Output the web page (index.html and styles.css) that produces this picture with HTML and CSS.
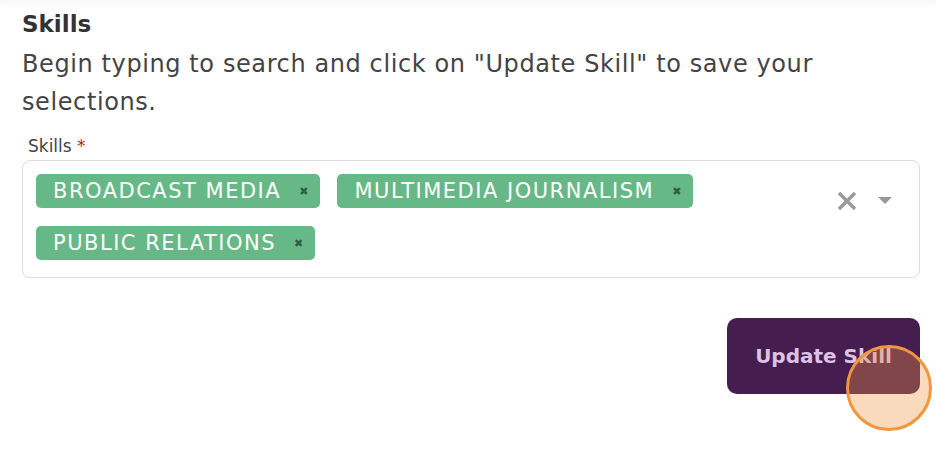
FILE: index.html
```html
<!DOCTYPE html>
<html lang="en">
<head>
    <meta charset="UTF-8">
    <title>Skills</title>
    <link rel="stylesheet" href="styles.css">
</head>
<body>
    <div class="top-bar"></div>

    <div class="section">
        <h2 class="section-title">Skills</h2>
        <p class="section-help">Begin typing to search and click on "Update Skill" to save your selections.</p>

        <label class="field-label">Skills <span class="required">*</span></label>
        <div class="multi-select">
            <div class="tags">
                <span class="tag">BROADCAST MEDIA <span class="tag-remove">&#x2716;</span></span>
                <span class="tag">MULTIMEDIA JOURNALISM <span class="tag-remove">&#x2716;</span></span>
                <span class="tag">PUBLIC RELATIONS <span class="tag-remove">&#x2716;</span></span>
            </div>
            <div class="controls">
                <svg class="clear-icon" width="22" height="22" viewBox="0 0 22 22">
                    <path d="M3 3 L19 19 M19 3 L3 19" stroke="#999" stroke-width="3.4" stroke-linecap="butt"/>
                </svg>
                <svg class="caret-icon" width="14" height="8" viewBox="0 0 14 8">
                    <path d="M0 0 L14 0 L7 7 Z" fill="#999"/>
                </svg>
            </div>
        </div>

        <div class="actions">
            <button class="update-btn">Update Skill</button>
            <div class="click-marker"></div>
        </div>
    </div>
</body>
</html>
```

FILE: styles.css
```css
html, body {
    min-height: 100%;
}

body {
    margin: 0;
    padding: 0;
    font-family: "DejaVu Sans", Arial, sans-serif;
    background-color: #fff;
    color: #3a3a3a;
    min-height: 464px;
}

.top-bar {
    height: 0;
    box-shadow: 0 0 8px 3px rgba(0,0,0,0.06);
}

.section {
    padding: 9px 16px 80px 22px;
}

.section-title {
    margin: 0 0 6px 0;
    font-size: 23px;
    font-weight: 700;
    line-height: 30px;
    color: #333;
}

.section-help {
    margin: 0;
    font-size: 24px;
    letter-spacing: 0.6px;
    line-height: 38px;
    color: #444;
    max-width: 830px;
}

.field-label {
    display: block;
    margin: 14px 0 0 6px;
    font-size: 17px;
    line-height: 22px;
    color: #444;
}

.required {
    color: #b3262b;
}

.multi-select {
    margin-top: 3px;
    border: 1px solid #ddd;
    border-radius: 8px;
    display: flex;
    align-items: flex-start;
    padding: 13px 14px 17px 13px;
    min-height: 86px;
}

.tags {
    flex: 1;
    display: flex;
    flex-wrap: wrap;
    gap: 18px 17px;
}

.tag {
    display: inline-flex;
    align-items: center;
    height: 34px;
    padding: 0 12px 0 17px;
    background-color: #66b887;
    color: #fff;
    border-radius: 5px;
    font-size: 21px;
    letter-spacing: 1.5px;
}

.tag-remove {
    margin-left: 18px;
    font-size: 11px;
    letter-spacing: 0;
    color: #2f5f41;
}

.controls {
    display: flex;
    align-items: center;
    gap: 20px;
    padding-top: 16px;
    padding-right: 13px;
}

.actions {
    display: flex;
    justify-content: flex-end;
    margin-top: 40px;
    position: relative;
}

.update-btn {
    width: 193px;
    height: 76px;
    border: none;
    border-radius: 10px;
    background-color: #461d4f;
    color: #dcc2e6;
    font-family: "DejaVu Sans", Arial, sans-serif;
    font-size: 20px;
    font-weight: 700;
}

.click-marker {
    position: absolute;
    left: 824px;
    top: 27px;
    width: 80px;
    height: 80px;
    border: 3px solid #f0963f;
    border-radius: 50%;
    background-color: rgba(240, 150, 63, 0.35);
}
```
